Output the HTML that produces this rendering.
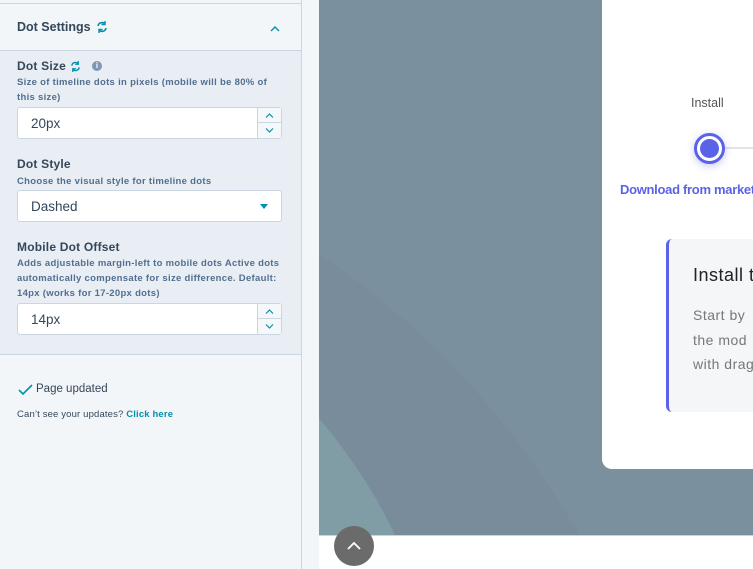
<!DOCTYPE html>
<html><head><style>
*{box-sizing:border-box;margin:0;padding:0}
html,body{width:753px;height:569px;overflow:hidden}
body{position:relative;font-family:"Liberation Sans",sans-serif;background:#fff}
.sb{position:absolute;left:0;top:0;width:302px;height:569px;background:#f3f6f9;border-right:1px solid #cbd6e2}
.hdr{position:absolute;left:0;top:3px;width:301px;height:48px;border-top:1px solid #cbd6e2;border-bottom:1px solid #cbd6e2;background:#f3f6f9}
.hdr b{position:absolute;left:17px;top:16px;font-size:12.5px;color:#33475b}
.body{position:absolute;left:0;top:51px;width:301px;height:304px;background:#e9eef4;border-bottom:1px solid #cbd6e2}
.lbl{position:absolute;left:17px;font-size:12px;font-weight:bold;color:#33475b;letter-spacing:.2px}
.hlp{position:absolute;left:17px;font-size:9.5px;font-weight:bold;color:#516f90;line-height:15px;width:266px;letter-spacing:.3px}
.inp{position:absolute;left:17px;width:265px;height:32px;background:#fff;border:1px solid #cbd6e2;border-radius:3px;font-size:13.5px;color:#33475b;padding:8px 13px}
.sp{position:absolute;right:0;top:0;width:24px;height:30px;border-left:1px solid #cbd6e2;background:#f5f8fa}
.sp div{height:15px;border-bottom:1px solid #cbd6e2;position:relative}
.sp svg{position:absolute;left:7px;top:5px}
.main{position:absolute;left:302px;top:0;width:17px;height:569px;background:#f3f6f9}
.pv{position:absolute;left:319px;top:0;width:434px;height:536px;background:#7b909f;overflow:hidden}
.bot{position:absolute;left:319px;top:535px;width:434px;height:34px;background:#fff;border-top:1px solid #cdd3d8}
</style></head><body>
<div class="sb">
<div class="hdr"><b>Dot Settings</b>
<svg style="position:absolute;left:96px;top:17px" width="12" height="12" viewBox="0 0 12 12"><path d="M2 5a4 4 0 0 1 7-2M10 7a4 4 0 0 1-7 2" stroke="#0091ae" stroke-width="1.6" fill="none"/><path d="M9 0v3.5H5.5M3 12V8.5h3.5" stroke="#0091ae" stroke-width="1.4" fill="none"/></svg>
<svg style="position:absolute;left:270px;top:21px" width="10" height="7" viewBox="0 0 10 7"><path d="M1 6l4-4 4 4" stroke="#0091ae" stroke-width="1.4" fill="none"/></svg>
</div>
<div class="body">
<div class="lbl" style="top:8px">Dot Size</div>
<svg style="position:absolute;left:70px;top:10px" width="11" height="11" viewBox="0 0 12 12"><path d="M2 5a4 4 0 0 1 7-2M10 7a4 4 0 0 1-7 2" stroke="#0091ae" stroke-width="1.6" fill="none"/><path d="M9 0v3.5H5.5M3 12V8.5h3.5" stroke="#0091ae" stroke-width="1.4" fill="none"/></svg>
<div style="position:absolute;left:92px;top:10px;width:10px;height:10px;border-radius:50%;background:#7c98b6;color:#fff;font-size:8px;text-align:center;line-height:10px;font-weight:bold">i</div>
<div class="hlp" style="top:24px">Size of timeline dots in pixels (mobile will be 80% of this size)</div>
<div class="inp" style="top:56px">20px<div class="sp"><div><svg width="9" height="5" viewBox="0 0 9 5"><path d="M1 4.5l3.5-3.5 3.5 3.5" stroke="#0091ae" stroke-width="1.2" fill="none"/></svg></div><div style="border:0"><svg width="9" height="5" viewBox="0 0 9 5"><path d="M1 .5l3.5 3.5 3.5-3.5" stroke="#0091ae" stroke-width="1.2" fill="none"/></svg></div></div></div>
<div class="lbl" style="top:106px">Dot Style</div>
<div class="hlp" style="top:123px">Choose the visual style for timeline dots</div>
<div class="inp" style="top:139px">Dashed<div style="position:absolute;right:13px;top:13px;border-left:4px solid transparent;border-right:4px solid transparent;border-top:5px solid #0091ae"></div></div>
<div class="lbl" style="top:189px">Mobile Dot Offset</div>
<div class="hlp" style="top:205px">Adds adjustable margin-left to mobile dots Active dots automatically compensate for size difference. Default: 14px (works for 17-20px dots)</div>
<div class="inp" style="top:252px">14px<div class="sp"><div><svg width="9" height="5" viewBox="0 0 9 5"><path d="M1 4.5l3.5-3.5 3.5 3.5" stroke="#0091ae" stroke-width="1.2" fill="none"/></svg></div><div style="border:0"><svg width="9" height="5" viewBox="0 0 9 5"><path d="M1 .5l3.5 3.5 3.5-3.5" stroke="#0091ae" stroke-width="1.2" fill="none"/></svg></div></div></div>
</div>
<svg style="position:absolute;left:18px;top:384px" width="15" height="12" viewBox="0 0 15 12"><path d="M1 6l4 4 9-9" stroke="#0091ae" stroke-width="1.6" fill="none"/></svg>
<div style="position:absolute;left:36px;top:383px;font-size:11.5px;color:#33475b">Page updated</div>
<div style="position:absolute;left:17px;top:409px;font-size:9.5px;color:#33475b;letter-spacing:.15px">Can’t see your updates? <b style="color:#0091ae">Click here</b></div>
</div>
<div class="main"></div>
<div class="pv">
<div style="position:absolute;left:-1310px;top:110px;width:1680px;height:1680px;border-radius:50%;background:#798c9b"></div>
<div style="position:absolute;left:-950px;top:230px;width:1080px;height:1080px;border-radius:50%;background:#809da6"></div>
<div style="position:absolute;left:283px;top:-10px;width:200px;height:479px;background:#fff;border-radius:10px">
<div style="position:absolute;left:89px;top:106px;font-size:12.5px;color:#555">Install</div>
<div style="position:absolute;left:120px;top:157px;width:100px;height:2px;background:#e4e4e4"></div>
<div style="position:absolute;left:92px;top:143px;width:31px;height:31px;border-radius:50%;background:#fff;border:3px solid #5a63e8;box-shadow:0 2px 8px rgba(90,99,232,.35)"><div style="margin:3px;width:19px;height:19px;border-radius:50%;background:#5a63e8"></div></div>
<div style="position:absolute;left:18px;top:192px;font-size:13px;font-weight:bold;color:#5a63e8;white-space:nowrap;letter-spacing:-.3px">Download from marketplace</div>
<div style="position:absolute;left:64px;top:249px;width:200px;height:173px;background:#f5f6f8;border-left:3px solid #5a63e8;border-radius:6px 0 0 6px">
<div style="position:absolute;left:24px;top:26px;font-size:18px;color:#222;letter-spacing:.5px">Install the</div>
<div style="position:absolute;left:24px;top:64px;font-size:14px;color:#777;line-height:24.5px;letter-spacing:.5px">Start by<br>the mod<br>with drag</div>
</div></div>
</div>
<div class="bot"></div>
<div style="position:absolute;left:334px;top:526px;width:40px;height:40px;border-radius:50%;background:#6b6b6b"></div>
<svg style="position:absolute;left:346px;top:541px" width="16" height="9" viewBox="0 0 16 9"><path d="M2 8l6-6 6 6" stroke="#fff" stroke-width="1.8" fill="none"/></svg>
</body></html>
